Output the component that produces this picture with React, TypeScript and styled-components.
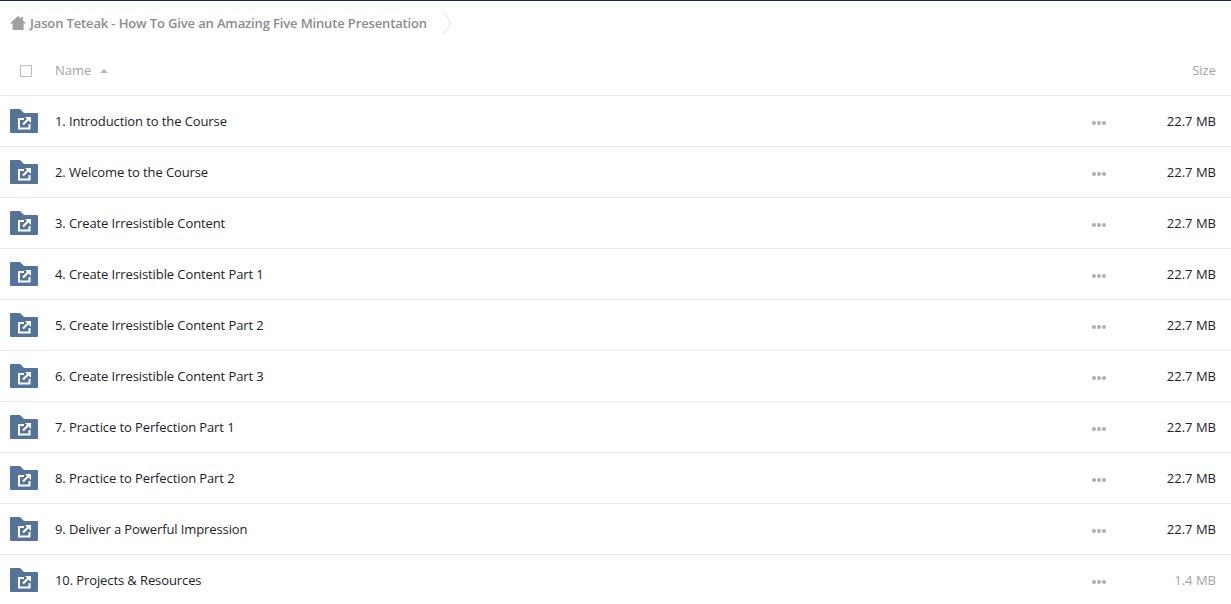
import React from 'react';
import styled, { createGlobalStyle } from 'styled-components';

const Global = createGlobalStyle`
    html, body {
        margin: 0;
        padding: 0;
        height: 100%;
        overflow: hidden;
        background: #fff;
    }
`;

const Page = styled.div`
    height: 604px;
    overflow: hidden;
    border-top: 1px solid #1a2b45;
    font-family: "Open Sans", sans-serif;
    font-size: 13px;
    color: #1c2229;
`;

const Breadcrumb = styled.div`
    height: 44px;
    display: flex;
    align-items: center;
    padding-left: 10px;
    color: #8c8c8c;
    font-weight: 600;
`;

const CrumbText = styled.span`
    margin-left: 4px;
    letter-spacing: -0.14px;
`;

const Chevron = styled.svg`
    margin-left: 15px;
    flex: none;
`;

const HeaderRow = styled.div`
    height: 50px;
    display: flex;
    align-items: center;
    border-bottom: 1px solid #ececec;
    color: #a5a5a5;
`;

const CheckCell = styled.div`
    width: 55px;
    flex: none;
    display: flex;
    padding-left: 20px;
    box-sizing: border-box;
`;

const Checkbox = styled.span`
    width: 12px;
    height: 12px;
    margin-top: 2px;
    box-sizing: border-box;
    border: 1px solid #bdbdbd;
    display: block;
`;

const NameHead = styled.div`
    flex: 1;
    display: flex;
    align-items: center;
    gap: 9px;
`;

const SortArrow = styled.span`
    width: 0;
    height: 0;
    margin-top: 2px;
    border-left: 4px solid transparent;
    border-right: 4px solid transparent;
    border-bottom: 4px solid #b5b5b5;
`;

const SizeCol = styled.div<{ $muted?: boolean }>`
    width: 100px;
    flex: none;
    text-align: right;
    padding-right: 15px;
    box-sizing: border-box;
    color: ${(p) => (p.$muted ? '#a5a5a5' : 'inherit')};
`;

const Row = styled.div`
    height: 50px;
    display: flex;
    align-items: center;
    border-bottom: 1px solid #ececec;
`;

const IconCell = styled.div`
    width: 55px;
    flex: none;
    padding-left: 10px;
    box-sizing: border-box;
    display: flex;
`;

const RowName = styled.div`
    flex: 1;
    letter-spacing: -0.1px;
`;

const Dots = styled.div`
    width: 39px;
    flex: none;
    display: flex;
    gap: 1px;
    margin-top: 3px;
`;

const Dot = styled.span`
    width: 4px;
    height: 4px;
    border-radius: 50%;
    background: #b0b0b0;
`;

const HomeIcon = () => (
    <svg width="16" height="14" viewBox="0 0 16 14">
        <path d="M8 0 L11 2.6 V1.2 H13 V4.4 L16 7.5 H13.6 V14 H2.6 V7.5 H0 Z" fill="#a0a0a0" />
    </svg>
);

const FolderLink = () => (
    <svg width="28" height="24" viewBox="0 0 28 24">
        <path d="M0 1 Q0 0 1 0 H10 L14 4 H27 Q28 4 28 5 V23 Q28 24 27 24 H1 Q0 24 0 23 Z" fill="#557299" />
        <path d="M14 10 H9 V19.5 H19.5 V15" fill="none" stroke="#fff" strokeWidth="2" />
        <path d="M13 15.5 L18 10.5" fill="none" stroke="#fff" strokeWidth="2.2" />
        <path d="M15 8 H21 V14 Z" fill="#fff" />
    </svg>
);

const ITEMS = [
    { name: '1. Introduction to the Course', size: '22.7 MB' },
    { name: '2. Welcome to the Course', size: '22.7 MB' },
    { name: '3. Create Irresistible Content', size: '22.7 MB' },
    { name: '4. Create Irresistible Content Part 1', size: '22.7 MB' },
    { name: '5. Create Irresistible Content Part 2', size: '22.7 MB' },
    { name: '6. Create Irresistible Content Part 3', size: '22.7 MB' },
    { name: '7. Practice to Perfection Part 1', size: '22.7 MB' },
    { name: '8. Practice to Perfection Part 2', size: '22.7 MB' },
    { name: '9. Deliver a Powerful Impression', size: '22.7 MB' },
    { name: '10. Projects & Resources', size: '1.4 MB', muted: true },
];

export default function App() {
    return (
        <Page>
            <Global />
            <Breadcrumb>
                <HomeIcon />
                <CrumbText>Jason Teteak - How To Give an Amazing Five Minute Presentation</CrumbText>
                <Chevron width="10" height="26" viewBox="0 0 10 26">
                    <path d="M1 1 L9 13 L1 25" fill="none" stroke="#e2e2e2" strokeWidth="1" />
                </Chevron>
            </Breadcrumb>
            <HeaderRow>
                <CheckCell>
                    <Checkbox />
                </CheckCell>
                <NameHead>
                    Name
                    <SortArrow />
                </NameHead>
                <SizeCol>Size</SizeCol>
            </HeaderRow>
            {ITEMS.map((item) => (
                <Row key={item.name}>
                    <IconCell>
                        <FolderLink />
                    </IconCell>
                    <RowName>{item.name}</RowName>
                    <Dots>
                        <Dot />
                        <Dot />
                        <Dot />
                    </Dots>
                    <SizeCol $muted={item.muted}>{item.size}</SizeCol>
                </Row>
            ))}
        </Page>
    );
}
